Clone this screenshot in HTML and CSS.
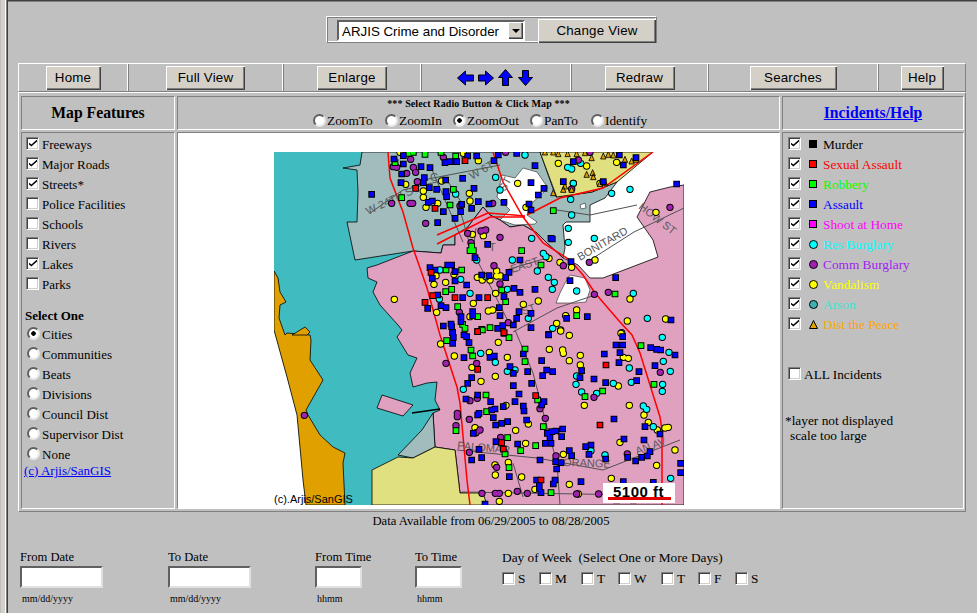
FILE: index.html
```html
<!DOCTYPE html>
<html lang="en">
<head>
<meta charset="utf-8">
<title>ARJIS Crime and Disorder</title>
<link rel="stylesheet" href="styles.css">
</head>
<body>
<main class="page">
  <form class="viewbar">
    <div class="selectbox">
      <select class="viewselect"><option>ARJIS Crime and Disorder</option></select>
      <span class="selectarrow"></span>
    </div>
    <button type="button" class="btn btn-view">Change View</button>
  </form>

  <nav class="toolbar">
    <div class="tool t1"><button type="button" class="btn b-home">Home</button></div>
    <div class="tool t2"><button type="button" class="btn b-full">Full View</button></div>
    <div class="tool t3"><button type="button" class="btn b-enl">Enlarge</button></div>
    <div class="tool t4">
      <svg class="arrows" viewBox="0 0 77 18" width="77" height="18">
        <path class="arrow" d="M.5 9 8.500 2V6H16.500V12H8.500V16Z"/>
        <path class="arrow" d="M36.500 9 28.500 2V6H21.500V12H28.500V16Z"/>
        <path class="arrow" d="M48.500.5 41.500 8.500H45.500V16.500H51.500V8.500H55.500Z"/>
        <path class="arrow" d="M68.500 16.500 61.500 8.500H65.500V1.500H71.500V8.500H75.500Z"/>
      </svg>
    </div>
    <div class="tool t5"><button type="button" class="btn b-red">Redraw</button></div>
    <div class="tool t6"><button type="button" class="btn b-sea">Searches</button></div>
    <div class="tool t7"><button type="button" class="btn b-help">Help</button></div>
  </nav>

  <section class="panels">
    <div class="cell head"><h2 class="title">Map Features</h2></div>
    <div class="cell head head-center">
      <div class="instruct">*** Select Radio Button &amp; Click Map ***</div>
      <div class="modes">
        <label class="mode m1"><input type="radio" name="m" class="rd">ZoomTo</label>
        <label class="mode m2"><input type="radio" name="m" class="rd">ZoomIn</label>
        <label class="mode m3"><input type="radio" name="m" class="rd" checked>ZoomOut</label>
        <label class="mode m4"><input type="radio" name="m" class="rd">PanTo</label>
        <label class="mode m5"><input type="radio" name="m" class="rd">Identify</label>
      </div>
    </div>
    <div class="cell head"><h2 class="title"><a href="#" class="link">Incidents/Help</a></h2></div>

    <div class="cell side left">
      <label class="row"><input type="checkbox" class="cb" checked>Freeways</label>
      <label class="row"><input type="checkbox" class="cb" checked>Major Roads</label>
      <label class="row"><input type="checkbox" class="cb" checked>Streets*</label>
      <label class="row"><input type="checkbox" class="cb">Police Facilities</label>
      <label class="row"><input type="checkbox" class="cb">Schools</label>
      <label class="row"><input type="checkbox" class="cb">Rivers</label>
      <label class="row"><input type="checkbox" class="cb" checked>Lakes</label>
      <label class="row"><input type="checkbox" class="cb">Parks</label>
      <div class="selectone">Select One</div>
      <label class="row"><input type="radio" name="g" class="rd rd-list" checked>Cities</label>
      <label class="row"><input type="radio" name="g" class="rd rd-list">Communities</label>
      <label class="row"><input type="radio" name="g" class="rd rd-list">Beats</label>
      <label class="row"><input type="radio" name="g" class="rd rd-list">Divisions</label>
      <label class="row"><input type="radio" name="g" class="rd rd-list">Council Dist</label>
      <label class="row"><input type="radio" name="g" class="rd rd-list">Supervisor Dist</label>
      <label class="row"><input type="radio" name="g" class="rd rd-list">None</label>
      <a href="#" class="link credit">(c) Arjis/SanGIS</a>
    </div>

    <div class="cell mapcell">
      <svg class="map" viewBox="274 152 410 353" width="410" height="353" role="img" aria-label="Crime map">
        <defs>
          <path id="bA" d="M372 42h.1M400 32h.1M400 57h.1M453 65h.1M480 68h.1M395 87h.1M393 113h.1M463 98h.1M527 105h.1M460 113h.1M478 128h.1M500 133h.1M528 140h.1M530 155h.1M612 130h.1M578 100h.1M305 148h.1M525 53h.1M540 50h.1M560 50h.1M593 33h.1M620 33h.1M672 47h.1M685 30h.1M740 25h.1M795 62h.1M783 113h.1M822 130h.1M805 150h.1M777 177h.1M783 195h.1M702 172h.1M657 177h.1M625 170h.1M605 190h.1M575 178h.1M572 200h.1M520 200h.1M555 220h.1M503 233h.1M487 168h.1M475 172h.1M653 298h.1M615 338h.1M750 345h.1M843 280h.1M847 282h.1M903 350h.1M1000 110h.1M1098 38h.1M1060 60h.1M1048 30h.1M910 50h.1M880 110h.1M1220 117h.1M1037 398h.1M900 407h.1M795 433h.1M750 442h.1M732 430h.1M717 382h.1M707 398h.1M657 392h.1M635 390h.1M590 420h.1M555 408h.1M555 380h.1M533 360h.1M545 360h.1M495 375h.1M480 368h.1M487 400h.1M503 450h.1M578 458h.1M627 458h.1M702 455h.1M688 488h.1M690 512h.1M747 500h.1M740 520h.1M730 540h.1M783 548h.1M783 505h.1M890 520h.1M952 515h.1M1203 525h.1M608 500h.1M608 512h.1M573 515h.1M528 488h.1M513 482h.1M473 490h.1M543 537h.1M520 543h.1M545 545h.1M548 562h.1M683 550h.1M698 542h.1M836 568h.1M573 530h.1"/>
          <path id="rA" d="M437 130h.1M495 190h.1M465 472h.1M488 452h.1M483 382h.1M555 458h.1M653 458h.1M623 560h.1M702 565h.1M585 47h.1"/>
          <path id="gA" d="M375 53h.1M415 25h.1M430 22h.1M465 28h.1M513 22h.1M557 33h.1M550 133h.1M395 158h.1M540 180h.1M850 197h.1M755 317h.1M813 360h.1M600 317h.1M610 317h.1M605 303h.1M528 375h.1M575 375h.1M527 440h.1M545 433h.1M695 435h.1M707 470h.1M563 485h.1M623 515h.1M920 512h.1M578 538h.1M585 550h.1M635 553h.1M660 548h.1M1035 447h.1"/>
          <path id="yA" d="M390 22h.1M580 25h.1M625 47h.1M407 118h.1M515 108h.1M460 138h.1M460 157h.1M468 187h.1M503 175h.1M598 145h.1M600 168h.1M743 115h.1M768 187h.1M865 55h.1M950 63h.1M1040 52h.1M910 115h.1M990 115h.1M607 268h.1M640 272h.1M837 340h.1M870 352h.1M905 367h.1M975 345h.1M622 397h.1M637 405h.1M660 405h.1M680 378h.1M680 393h.1M692 393h.1M527 412h.1M492 418h.1M373 463h.1M500 502h.1M610 475h.1M677 445h.1M760 478h.1M805 468h.1M655 498h.1M668 495h.1M600 515h.1M860 535h.1M872 555h.1M887 512h.1M920 495h.1M1072 528h.1M1080 462h.1M1187 522h.1M1055 563h.1M498 392h.1M552 388h.1M1158 202h.1"/>
          <path id="cA" d="M677 97h.1M690 135h.1M557 147h.1M785 280h.1M895 250h.1M895 292h.1M973 280h.1M905 210h.1M902 163h.1M893 67h.1M905 72h.1M932 55h.1M910 115h.1M1025 145h.1M1080 133h.1M727 345h.1M802 378h.1M820 325h.1M828 335h.1M835 397h.1M853 412h.1M847 433h.1M920 438h.1M712 433h.1M600 445h.1M572 403h.1M510 375h.1M508 462h.1M775 520h.1M848 550h.1M1090 445h.1M1132 520h.1M620 345h.1M648 395h.1M765 30h.1"/>
          <path id="pA" d="M380 67h.1M422 43h.1M430 67h.1M437 82h.1M410 85h.1M442 110h.1M520 37h.1M365 175h.1M420 175h.1M428 175h.1M467 235h.1M570 183h.1M593 265h.1M633 258h.1M647 255h.1M690 277h.1M603 293h.1M672 362h.1M690 417h.1M880 362h.1M958 352h.1M1015 442h.1M973 448h.1M1200 187h.1M905 132h.1M960 22h.1M925 45h.1M668 175h.1M568 502h.1M715 533h.1M707 22h.1M370 65h.1"/>
          <path id="bB" d="M548 8h.1M550 22h.1M548 40h.1M582 15h.1M590 20h.1M597 38h.1M660 82h.1M673 78h.1M582 83h.1M605 143h.1M593 160h.1M720 110h.1M730 130h.1M760 72h.1M773 125h.1M785 160h.1M730 167h.1M815 92h.1M830 120h.1M848 125h.1M818 137h.1M836 15h.1M1003 72h.1M1038 45h.1M1058 45h.1M1058 20h.1M1050 68h.1M1047 98h.1M1107 125h.1M1142 53h.1M1160 58h.1M1172 60h.1M1215 75h.1M1155 107h.1M1100 152h.1M1007 158h.1M972 147h.1M930 143h.1M935 122h.1M747 192h.1M735 215h.1M662 215h.1M665 240h.1M675 237h.1M700 230h.1M670 263h.1M677 285h.1M695 280h.1M713 275h.1M760 228h.1M762 243h.1M770 270h.1M822 215h.1M815 225h.1M832 310h.1M845 305h.1M858 303h.1M878 297h.1M875 320h.1M840 323h.1M826 340h.1M843 340h.1M743 342h.1M627 250h.1M623 255h.1M623 195h.1M588 207h.1M610 310h.1M678 335h.1M627 358h.1M635 383h.1M605 390h.1M810 390h.1M857 395h.1M873 398h.1M860 417h.1M898 362h.1M905 377h.1M947 350h.1M957 373h.1M963 345h.1M1007 387h.1M1073 382h.1M1097 393h.1M1115 382h.1M1132 378h.1M1140 365h.1M1122 330h.1M1062 327h.1M1032 267h.1M1125 290h.1M1170 312h.1M1232 400h.1M1232 428h.1M718 440h.1M933 455h.1M855 450h.1M850 462h.1M808 463h.1M808 475h.1M800 450h.1M813 488h.1M1060 455h.1M1150 457h.1M1040 510h.1M1090 510h.1M645 522h.1"/>
          <path id="rB" d="M623 5h.1M702 8h.1M623 118h.1M1008 105h.1M797 197h.1M990 285h.1M695 338h.1M700 357h.1M813 450h.1"/>
          <path id="gB" d="M530 32h.1M603 60h.1M608 78h.1M637 0h.1M717 23h.1M765 57h.1M765 95h.1M648 195h.1M650 245h.1M803 210h.1M820 290h.1M558 302h.1M713 323h.1M797 347h.1M752 362h.1M705 372h.1M717 413h.1M843 488h.1M1113 47h.1M1152 163h.1M998 183h.1M945 200h.1"/>
          <path id="yB" d="M512 42h.1M553 78h.1M685 37h.1M658 67h.1M712 82h.1M838 58h.1M878 60h.1M880 70h.1M931 76h.1M898 92h.1M931 105h.1M1053 10h.1M1060 82h.1M1075 85h.1M606 112h.1M676 139h.1M633 154h.1M872 3h.1M898 16h.1M1045 168h.1M1078 226h.1M1122 255h.1M1135 277h.1M1162 300h.1M1185 294h.1M1195 292h.1M1215 360h.1M1050 337h.1M1160 406h.1M1024 445h.1M943 226h.1M708 226h.1M737 301h.1M775 282h.1M615 293h.1M767 340h.1M880 373h.1M715 397h.1M675 405h.1M676 435h.1M755 441h.1M898 463h.1M795 478h.1M715 490h.1M688 514h.1M925 492h.1"/>
          <path id="cB" d="M632 70h.1M676 97h.1M712 124h.1M735 120h.1M920 138h.1M918 163h.1M935 186h.1M980 190h.1M1030 160h.1M1084 157h.1M1177 22h.1M1197 67h.1M1180 94h.1M1201 124h.1M1178 163h.1M1177 184h.1M580 178h.1M1120 228h.1M1130 238h.1M1150 290h.1M1078 114h.1M1005 375h.1M963 362h.1M1202 445h.1"/>
          <path id="pB" d="M528 100h.1M620 100h.1M103 256h.1M600 212h.1M622 205h.1M562 250h.1M562 260h.1M558 287h.1M598 268h.1M630 300h.1M618 308h.1M692 322h.1M810 236h.1M826 265h.1M972 202h.1M1171 127h.1M598 367h.1M680 412h.1M858 378h.1M1072 372h.1M636 490h.1M676 490h.1M688 490h.1M742 484h.1M772 490h.1M920 492h.1M986 492h.1M1062 490h.1"/>
          <path id="tA" d="M825 12 817 30H833ZM850 12 842 30H858ZM865 17 857 35H873ZM893 17 885 35H901ZM920 17 912 35H928ZM945 14 937 32H953ZM965 29 957 47H973ZM1015 19 1007 37H1023ZM1000 24 992 42H1008ZM1030 21 1022 39H1038ZM1065 34 1057 52H1073ZM1085 39 1077 57H1093ZM950 79 942 97H958ZM968 74 960 92H976ZM970 86 962 104H978ZM850 134 842 152H858ZM880 124 872 142H888ZM905 124 897 142H913ZM990 107 982 125H998ZM1005 104 997 122H1013ZM1098 34 1090 52H1106ZM885 114 877 132H893Z"/>
        </defs>

        <path class="sea" d="M274 152H500V505H274Z"/>
        <path class="ocean" d="M274 330 287 377 297 415 303 480 306 505H274Z"/>
        <path class="orange" d="M274 271 278 278 280 292 286 302 280 305 279 318 285 335 287 333 310 335 311 340 310 360 323 380 306 410 308 415 320 435 333 447 345 453 343 463 345 505H306L303 480 297 415 287 377 274 330Z"/>
        <path class="sea" d="M313 349 319 356 320 372 315 367Z"/>
        <path class="orange" d="M292 335 305 327 310 332 307 335Z"/>

        <path class="greyland" d="M362 152 360 165 343 168 357 170 358 192 357 222 347 222 355 260 413 251 441 253 443 245 455 245 455 235 467 228 483 207 490 215 500 220 510 227 523 225 537 233 547 243 563 258 565 248 563 225 566 222 590 222 590 205 605 198 617 182 592 192 556 197 540 152Z"/>
        <path class="pink" d="M367 268 377 265 413 251 441 253 443 245 455 245 455 235 467 228 483 207 490 215 500 220 510 227 523 225 537 233 547 243 563 258 572 262 578 265 590 278 603 278 658 257 653 240 637 217 650 192 670 187 684 185V505H470L468 493 460 493 455 450 435 447 433 413 440 410 435 400 437 382 427 383 413 387 410 373 417 358 408 355 397 337 402 330 398 325 380 305 373 292 377 282 368 278Z"/>
        <path class="yellow" d="M540 152 556.700 197 592 192 617 182 653 152Z"/>
        <path class="whiteland" d="M502 175 515 178 523 168 537 172 548 188 530 205 527 215 537 222 535 224 515 225 500 220 510 210 497 197Z"/>
        <path class="whiteland" d="M565 283 570 275 585 278 590 290 586 302 575 303 556 303 560 293Z"/>
        <path class="whiteland" d="M580 205 585 203 586 208 581 209Z"/>
        <path class="pink" d="M382 395 413 405 403 416 377 408Z"/>
        <path class="greyland" d="M398 455 422 430 433 413 435 447 413 458Z"/>
        <path class="yellow" d="M372 470 398 457 413 458 435 447 455 450 460 493 483 493 487 505H372Z"/>
        <path class="bay" d="M412 413 440 409"/>

        <g class="streets">
          <path d="M423 180 500 165M370 213 403 190 445 180M430 165 463 242M460 210 470 245M476 228 473 252 510 325M447 180 463 205M506 270 547 258M513 332 557 308 595 295M587 262 634 232 684 208M557 210 590 215 637 205"/>
          <path d="M515 330 533 373 547 427 557 463 560 505M457 450 537 458 603 470 680 440M462 492 637 495M513 463 523 497"/>
        </g>
        <g class="freeways">
          <path d="M388 152 390 178 403 212 413 248 427 288 440 335 457 387 460 403 467 480 470 505"/>
          <path d="M493 152 503 182 523 217 543 243 570 260 583 275 595 293 620 322 632 335 640 353 660 417 662 430V505"/>
          <path d="M437 235 488 213 525 216"/>
          <path d="M437 244 490 217 525 217"/>
          <path d="M527 215 560 198 603 188 653 152"/>
        </g>
        <g class="labels">
          <text transform="translate(368 215) rotate(-25)">W 24TH ST</text>
          <text transform="translate(430 181)">C</text>
          <text transform="translate(472 180) rotate(-30)">W 6T</text>
          <text transform="translate(505 192) rotate(-62)">ST</text>
          <text transform="translate(580 261) rotate(-30)">BONITARD</text>
          <text transform="translate(638 208) rotate(38)">HOW ST</text>
          <text transform="translate(457 449) rotate(5)">PALOMAR</text>
          <text transform="translate(563 466) rotate(2)">ORANGE</text>
          <text transform="translate(637 455) rotate(-20)">AN AV</text>
          <text transform="translate(489 251)">T</text>
          <text transform="translate(512 273) rotate(-18)">EAST</text>
          <text transform="translate(523 315) rotate(-18)">ST</text>
        </g>

        <g transform="translate(270 145) scale(.3333)">
          <g class="circ"><use href="#yA" class="o"/><use href="#yA" class="f-y"/><use href="#cA" class="o"/><use href="#cA" class="f-c"/><use href="#pA" class="o"/><use href="#pA" class="f-p"/></g>
          <use href="#tA" class="tri"/>
          <g class="squ"><use href="#gA" class="o"/><use href="#gA" class="f-g"/><use href="#bA" class="o"/><use href="#bA" class="f-b"/><use href="#rA" class="o"/><use href="#rA" class="f-r"/></g>
        </g>
        <g transform="translate(270 330) scale(.3333)">
          <g class="circ"><use href="#yB" class="o"/><use href="#yB" class="f-y"/><use href="#cB" class="o"/><use href="#cB" class="f-c"/><use href="#pB" class="o"/><use href="#pB" class="f-p"/></g>
          <g class="squ"><use href="#gB" class="o"/><use href="#gB" class="f-g"/><use href="#bB" class="o"/><use href="#bB" class="f-b"/><use href="#rB" class="o"/><use href="#rB" class="f-r"/></g>
        </g>
        <text class="copy" x="274" y="503">(c).Arjis/SanGIS</text>
        <path class="scalebox" d="M603 483H675V503H603Z"/>
        <text class="scaletext" x="613" y="497">5100 ft</text>
        <path class="scalebar" d="M608 498.500H671"/>
      </svg>
    </div>

    <div class="cell side right">
      <label class="row"><input type="checkbox" class="cb" checked><span class="mk sq m-black"></span><span class="lg c-black">Murder</span></label>
      <label class="row"><input type="checkbox" class="cb" checked><span class="mk sq m-red"></span><span class="lg c-red">Sexual Assault</span></label>
      <label class="row"><input type="checkbox" class="cb" checked><span class="mk sq m-green"></span><span class="lg c-green">Robbery</span></label>
      <label class="row"><input type="checkbox" class="cb" checked><span class="mk sq m-blue"></span><span class="lg c-blue">Assault</span></label>
      <label class="row"><input type="checkbox" class="cb" checked><span class="mk sq m-mag"></span><span class="lg c-mag">Shoot at Home</span></label>
      <label class="row"><input type="checkbox" class="cb" checked><span class="mk ci m-cyan"></span><span class="lg c-cyan">Res Burglary</span></label>
      <label class="row"><input type="checkbox" class="cb" checked><span class="mk ci m-purple"></span><span class="lg c-purple">Comm Burglary</span></label>
      <label class="row"><input type="checkbox" class="cb" checked><span class="mk ci m-yellow"></span><span class="lg c-yellow">Vandalism</span></label>
      <label class="row"><input type="checkbox" class="cb" checked><span class="mk ci m-teal"></span><span class="lg c-teal">Arson</span></label>
      <label class="row"><input type="checkbox" class="cb" checked><svg class="mk" viewBox="0 0 9 9" width="9" height="9"><path class="legendtri" d="M4.500.5 8.500 8.500H.5Z"/></svg><span class="lg c-orange">Dist the Peace</span></label>
      <label class="row allrow"><input type="checkbox" class="cb">ALL Incidents</label>
      <p class="note">*layer not displayed<br><span class="noteindent">scale too large</span></p>
    </div>
  </section>

  <p class="available">Data Available from 06/29/2005 to 08/28/2005</p>

  <form class="filters">
    <div class="field f-date"><label>From Date</label><input type="text" class="txt txt-date"><small>mm/dd/yyyy</small></div>
    <div class="field f-date2"><label>To Date</label><input type="text" class="txt txt-date"><small>mm/dd/yyyy</small></div>
    <div class="field f-time"><label>From Time</label><input type="text" class="txt txt-time"><small>hhmm</small></div>
    <div class="field f-time2"><label>To Time</label><input type="text" class="txt txt-time"><small>hhmm</small></div>
    <div class="field days">
      <label class="daylabel">Day of Week &nbsp;(Select One or More Days)</label>
      <div class="dayrow">
        <label class="day d1"><input type="checkbox" class="cb">S</label>
        <label class="day d2"><input type="checkbox" class="cb">M</label>
        <label class="day d3"><input type="checkbox" class="cb">T</label>
        <label class="day d4"><input type="checkbox" class="cb">W</label>
        <label class="day d5"><input type="checkbox" class="cb">T</label>
        <label class="day d6"><input type="checkbox" class="cb">F</label>
        <label class="day d7"><input type="checkbox" class="cb">S</label>
      </div>
    </div>
  </form>
</main>
</body>
</html>
```

FILE: styles.css
```css
* { box-sizing: border-box; }
html, body { margin: 0; padding: 0; height: 613px; overflow: hidden; }
body {
  background: linear-gradient(90deg, #c0c0c0 0 1px, #d4d0c8 1px 5px, #fff 5px 6px, #808080 6px 7px, #c0c0c0 7px);
  font: 13.33px/15px "Liberation Serif", "Times New Roman", serif;
  color: #000;
}
.page {
  margin-left: 7px;
  height: 613px;
  background: #c0c0c0;
  border-left: 1px solid #404040;
  border-top: 1px solid #404040;
  box-shadow: inset 0 1px 0 #808080;
  padding-top: 15px;
  overflow: hidden;
}

/* view selector */
.viewbar {
  display: flex;
  width: 331px;
  height: 27px;
  margin-left: 318px;
  padding: 1px 0 0 10px;
  gap: 13px;
  border: 1px solid;
  border-color: #fff #808080 #808080 #fff;
  box-shadow: inset 1px 1px 0 #808080, inset -1px -1px 0 #fff;
}
.selectbox { position: relative; margin-top: 2px; width: 188px; height: 21px; }
.viewselect {
  appearance: none;
  width: 188px;
  height: 21px;
  padding: 1px 0 0 3px;
  background: #fff;
  font: 13.33px "Liberation Sans", Arial, sans-serif;
  color: #000;
  border: 2px solid;
  border-color: #606060 #fff #fff #606060;
  border-radius: 0;
}
.selectarrow {
  position: absolute;
  top: 2px;
  right: 2px;
  width: 15px;
  height: 17px;
  background: #d4d0c8;
  box-shadow: inset 1px 1px 0 #fff, inset -1px -1px 0 #404040, inset -2px -2px 0 #808080;
}
.selectarrow::after {
  content: "";
  position: absolute;
  top: 7px;
  left: 4px;
  border: 4px solid transparent;
  border-top-color: #000;
  border-bottom: 0;
}

.btn {
  height: 24px;
  padding: 0;
  background: #d4d0c8;
  color: #000;
  font: 13.33px/20px "Liberation Sans", Arial, sans-serif;
  letter-spacing: .2px;
  border: 0;
  border-radius: 0;
  box-shadow: inset 1px 1px 0 #fff, inset -1px -1px 0 #404040, inset -2px -2px 0 #808080;
}
.btn-view { width: 118px; margin-top: 1px; }
.b-home { width: 55px; }
.b-full { width: 79px; }
.b-enl { width: 70px; }
.b-red { width: 70px; }
.b-sea { width: 87px; }
.b-help { width: 43px; }

/* toolbar */
.toolbar {
  display: flex;
  width: 948px;
  height: 29px;
  margin: 20px 0 0 10px;
  border: 1px solid;
  border-color: #fff #808080 #808080 #fff;
}
.tool {
  display: flex;
  align-items: center;
  justify-content: center;
  border-left: 1px solid #808080;
  border-right: 1px solid #fff;
}
.t1 { width: 109px; border-left: 0; }
.t2 { width: 155px; }
.t3 { width: 138px; }
.t4 { width: 150px; padding-right: 2px; }
.t5 { width: 137px; }
.t6 { width: 170px; }
.t7 { width: 87px; border-right: 0; }
.arrows { display: block; }
.arrow { fill: #0000ff; stroke: #000; stroke-width: 1; }

/* main table */
.panels {
  display: grid;
  grid-template-columns: 154px 603px 182px;
  grid-template-rows: 34px 377px;
  gap: 2px;
  width: 948px;
  height: 420px;
  margin-left: 10px;
  padding: 3px 0 0 2px;
  border: 1px solid;
  border-color: #fff #808080 #808080 #fff;
}
.cell {
  border: 1px solid;
  border-color: #808080 #fff #fff #808080;
}
.head { display: flex; align-items: center; justify-content: center; }
.head-center { flex-direction: column; justify-content: flex-start; padding-top: 1px; }
.title { margin: 0; font: bold 15.7px/18px "Liberation Serif", serif; }
.link { color: #0000ff; text-decoration: underline; }
.instruct { font: bold 10px/12px "Liberation Serif", serif; letter-spacing: .1px; }
.modes { display: flex; align-self: flex-start; margin: 2px 0 0 135px; }
.mode { display: flex; align-items: center; height: 16px; }
.mode .rd { margin: 0 1px 0 0; }
.m1 { width: 72px; }
.m2 { width: 68px; }
.m3 { width: 77px; }
.m4 { width: 61px; }

.side { padding-top: 1px; }
.row { display: flex; align-items: center; height: 20px; padding-left: 4px; }
.left { font-size: 13px; }
.selectone { font-weight: bold; height: 17px; line-height: 17px; margin: 13px 0 0 3px; }
.credit { display: block; line-height: 13px; margin-left: 2px; }

.cb, .rd {
  appearance: none;
  flex: none;
  width: 13px;
  height: 13px;
  margin: 0 3px 2px 0;
  background: #fff;
  position: relative;
}
.cb {
  border: 1px solid;
  border-color: #808080 #fff #fff #808080;
  box-shadow: inset 1px 1px 0 #404040, inset -1px -1px 0 #d4d0c8;
}
.cb:checked::before {
  content: "";
  position: absolute;
  left: 2px;
  top: 2px;
  width: 8px;
  height: 7px;
  background: #000;
  clip-path: polygon(0 45%, 30% 70%, 100% 0, 100% 30%, 30% 100%, 0 70%);
}
.rd {
  border-radius: 50%;
  border: 2px solid;
  border-color: #606060 #e8e8e8 #e8e8e8 #606060;
}
.rd:checked { background: radial-gradient(circle, #000 0 2px, #fff 2.500px); }
.rd-list { margin-left: 1px; margin-right: 2px; }

/* map */
.mapcell {
  background: #fff;
  display: flex;
  justify-content: center;
  align-items: flex-start;
  padding: 19px 0 0 1px;
  overflow: hidden;
}
.map { display: block; }
.sea { fill: #40bcc0; stroke: none; }
.ocean { fill: #fff; }
.orange { fill: #e0a000; stroke: #000; stroke-width: .8; }
.greyland { fill: #a0bcbc; stroke: #000; stroke-width: .8; }
.pink { fill: #e0a0c0; stroke: #000; stroke-width: .8; }
.yellow { fill: #e0e080; stroke: #000; stroke-width: .8; }
.whiteland { fill: #fff; stroke: #000; stroke-width: .5; }
.bay { fill: none; stroke: #000; stroke-width: 1.500; }
.streets path { fill: none; stroke: #505050; stroke-width: 1; }
.freeways path { fill: none; stroke: #ff0000; stroke-width: 1.500; }
.labels text {
  font: 11px "Liberation Sans", Arial, sans-serif;
  fill: #585858;
}
.circ .o, .squ .o { stroke: #000; fill: none; }
.circ use { stroke-linecap: round; }
.squ use { stroke-linecap: square; }
.circ .o { stroke-width: 22; }
.squ .o { stroke-width: 20; }
.circ use:not(.o) { stroke-width: 16; fill: none; }
.squ use:not(.o) { stroke-width: 14; fill: none; }
.f-y { stroke: #ffff00; }
.f-c { stroke: #00ffff; }
.f-p { stroke: #a020b0; }
.f-g { stroke: #00ff00; }
.f-b { stroke: #0000ff; }
.f-r { stroke: #ff0000; }
.tri { fill: #e0a000; stroke: #000; stroke-width: 2.500; }
.copy { font: 11px "Liberation Sans", Arial, sans-serif; fill: #000; }
.scalebox { fill: #fff; }
.scaletext { font: bold 15px "Liberation Sans", Arial, sans-serif; letter-spacing: .5px; fill: #000; }
.scalebar { stroke: #e00000; stroke-width: 3; fill: none; }

/* legend */
.right .row { padding-left: 5px; }
.right .cb { margin-right: 8px; }
.mk { flex: none; display: block; width: 9px; height: 9px; border: 1px solid #000; }
svg.mk { border: 0; }
.sq { width: 8px; height: 8px; margin: 0 1px 0 0; }
.ci { border-radius: 50%; }
.lg { margin-left: 5px; }
.legendtri { fill: #e0a000; stroke: #000; }
.m-black { background: #000; }
.m-red { background: #f00; }
.m-green { background: #0f0; }
.m-blue { background: #00f; }
.m-mag { background: #f0f; }
.m-cyan { background: #0ff; }
.m-purple { background: #a020b0; }
.m-yellow { background: #ff0; }
.m-teal { background: #40b0b0; }
.c-black { color: #000; }
.c-red { color: #f00; }
.c-green { color: #0f0; }
.c-blue { color: #00f; }
.c-mag { color: #f0f; }
.c-cyan { color: #0ff; }
.c-purple { color: #a020f0; }
.c-yellow { color: #ff0; }
.c-teal { color: #40e0d0; }
.c-orange { color: #ffa500; }
.allrow { margin-top: 30px; }
.right .allrow .cb { margin-right: 3px; }
.note { margin: 29px 0 0 2px; }
.noteindent { margin-left: 5px; }

/* bottom */
.available { margin: 2px 0 0; text-align: center; padding-right: 3px; line-height: 15px; font-size: 12.67px; }
.filters { display: flex; margin: 21px 0 0 12px; font-size: 12.6px; }
.field { display: flex; flex-direction: column; align-items: flex-start; }
.field label { line-height: 15px; }
.daylabel { font-size: 13.33px; }
.f-date { width: 148px; }
.f-date2 { width: 147px; }
.f-time { width: 100px; }
.f-time2 { width: 86px; }
.txt {
  margin-top: 1px;
  height: 22px;
  padding: 0;
  background: #fff;
  border: 2px solid;
  border-color: #606060 #e0e0e0 #e0e0e0 #606060;
  border-radius: 0;
}
.txt-date { width: 83px; }
.txt-time { width: 47px; }
.field small { font: 10px/12px "Liberation Serif", serif; margin: 5px 0 0 2px; }
.days { padding-left: 1px; }
.dayrow { display: flex; margin-top: 2px; height: 22px; font-size: 13.33px; }
.day { display: flex; align-items: center; }
.day .cb { margin: 0 3px 0 0; }
.d1 { width: 37px; }
.d2 { width: 42px; }
.d3 { width: 37px; }
.d4 { width: 43px; }
.d5 { width: 37px; }
.d6 { width: 37px; }
```
